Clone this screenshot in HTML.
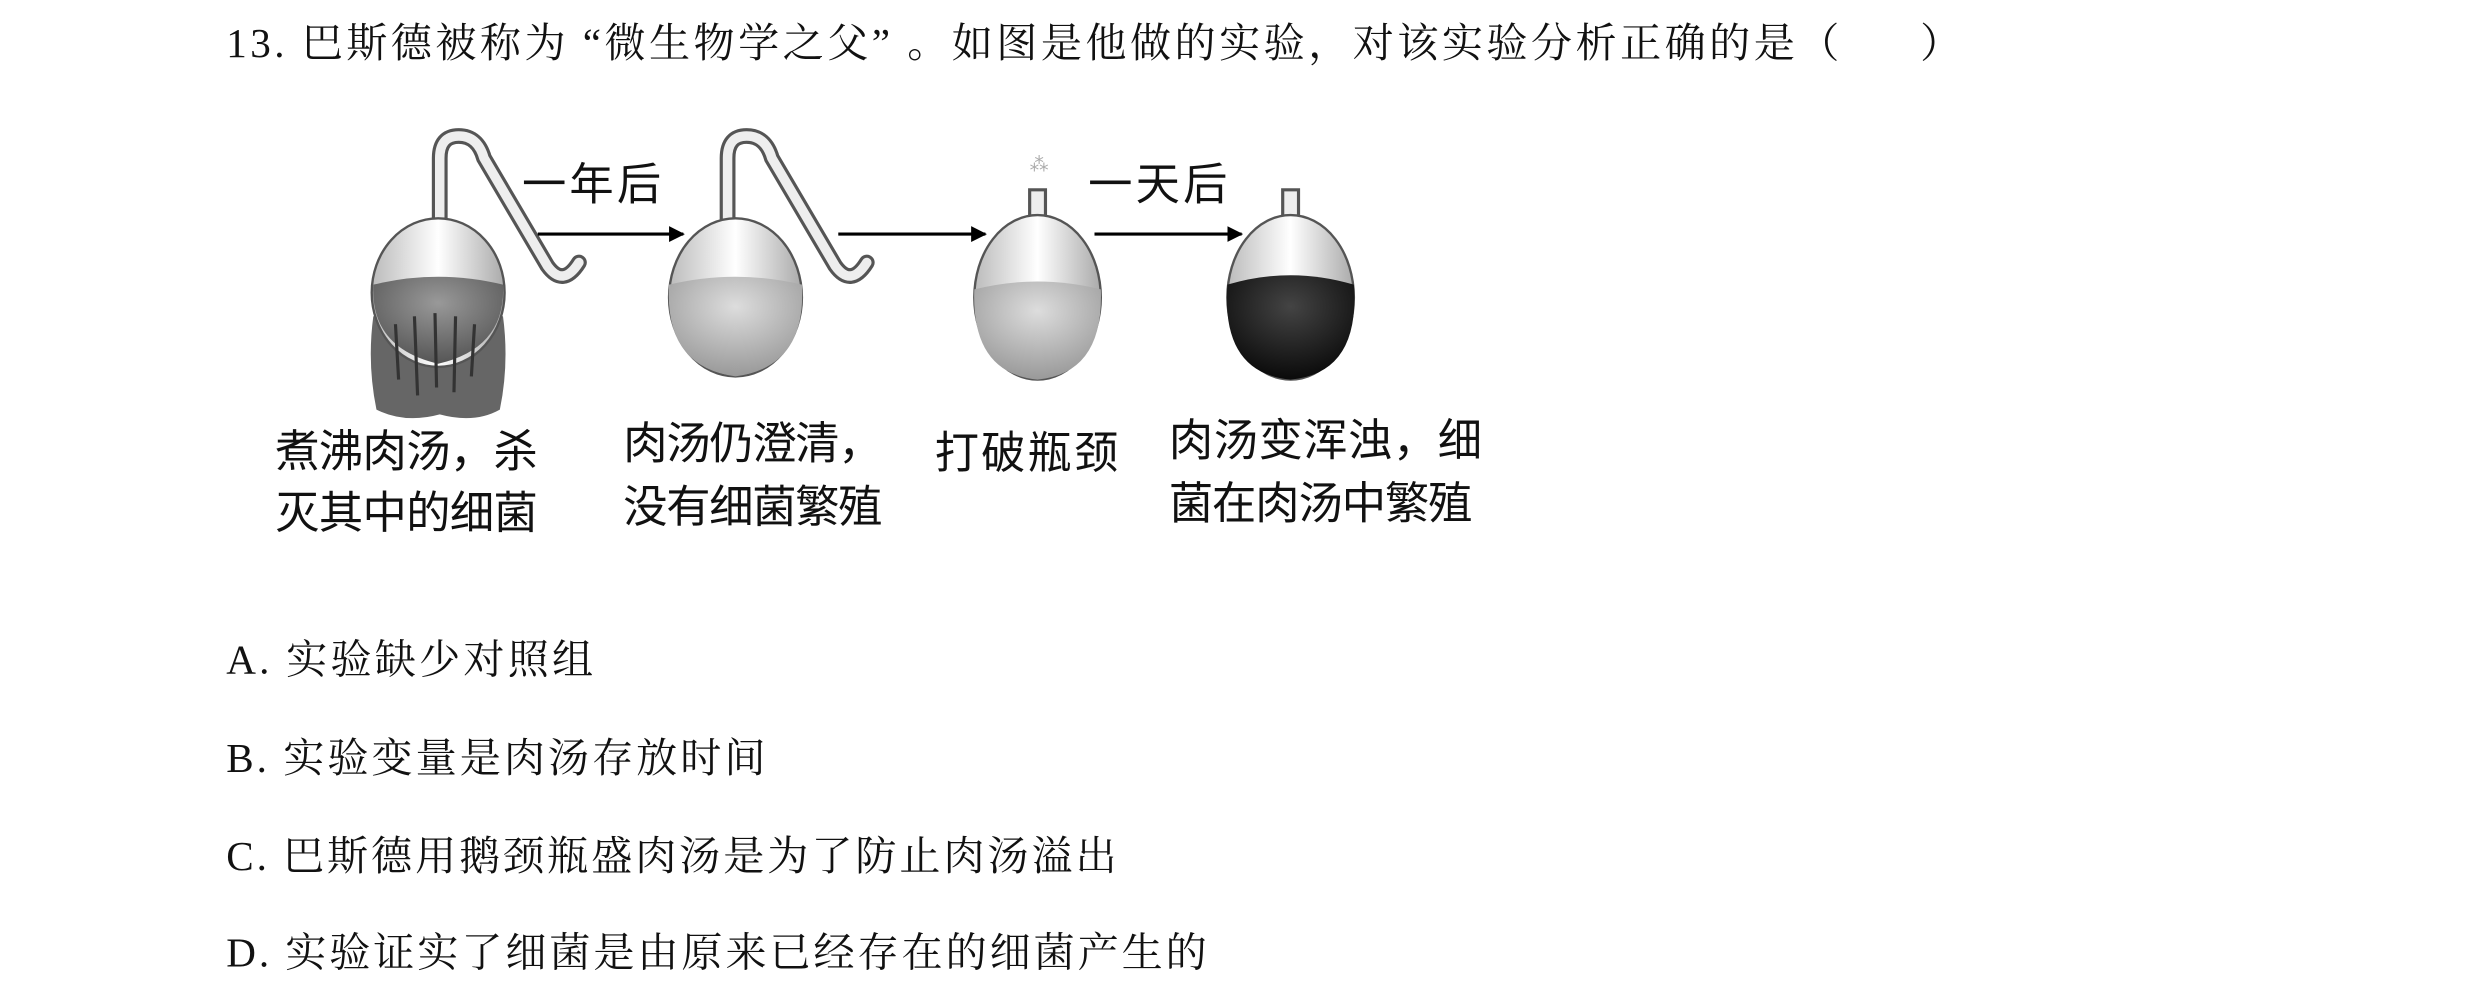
<!DOCTYPE html>
<html><head><meta charset="utf-8"><style>
html,body{margin:0;padding:0;background:#fff;width:2480px;height:991px;overflow:hidden}
svg{display:block}
.q{font-family:"Liberation Serif","Noto Serif CJK SC",serif;font-size:26px;fill:#111}
.l{font-family:"Liberation Sans","Noto Sans CJK SC",sans-serif;font-size:28px;fill:#111}
</style></head><body>
<svg width="2480" height="991" viewBox="0 0 1568 626.6" xmlns="http://www.w3.org/2000/svg">
<defs>
<linearGradient id="gl" x1="0" x2="1"><stop offset="0" stop-color="#bbb"/><stop offset=".5" stop-color="#fff"/><stop offset="1" stop-color="#aaa"/></linearGradient>
<radialGradient id="light" cx=".5" cy=".3" r=".7"><stop offset="0" stop-color="#ddd"/><stop offset="1" stop-color="#999"/></radialGradient>
<radialGradient id="dark" cx=".5" cy=".3" r=".7"><stop offset="0" stop-color="#444"/><stop offset="1" stop-color="#0a0a0a"/></radialGradient>
<radialGradient id="boil" cx=".5" cy=".3" r=".7"><stop offset="0" stop-color="#999"/><stop offset="1" stop-color="#555"/></radialGradient>
<marker id="ar" markerWidth="10" markerHeight="10" refX="9" refY="5" orient="auto" markerUnits="userSpaceOnUse"><path d="M0,0 L10,5 L0,10 Z" fill="#000"/></marker>
</defs>
<text class="q" x="143" y="36" textLength="1020" lengthAdjust="spacing">13. 巴斯德被称为 “微生物学之父” 。如图是他做的实验，对该实验分析正确的是（</text>
<text class="q" x="1214" y="36">）</text>

<!-- flask 1 -->
<path d="M278,140 L278,100 Q278,86 290,86 Q302,86 306,100 L346,168 Q356,182 366,166" fill="none" stroke="#555" stroke-width="10" stroke-linecap="round"/>
<path d="M278,140 L278,100 Q278,86 290,86 Q302,86 306,100 L346,168 Q356,182 366,166" fill="none" stroke="#eee" stroke-width="6" stroke-linecap="round"/>
<path d="M238,259 Q232,230 236,200 L318,200 Q322,230 316,259 Q300,268 278,262 Q256,268 238,259Z" fill="#666"/>
<ellipse cx="277" cy="185" rx="42" ry="47" fill="url(#gl)" stroke="#555" stroke-width="1.5"/>
<path d="M236,180 Q277,170 318,180 Q320,220 277,230 Q234,220 236,180Z" fill="url(#boil)"/>
<path d="M250,205 L252,240 M262,200 L264,250 M275,198 L276,245 M288,200 L287,248 M300,205 L298,238" stroke="#333" stroke-width="2"/>
<!-- flask 2 -->
<path d="M460,140 L460,100 Q460,86 472,86 Q484,86 488,100 L528,168 Q538,182 548,166" fill="none" stroke="#555" stroke-width="10" stroke-linecap="round"/>
<path d="M460,140 L460,100 Q460,86 472,86 Q484,86 488,100 L528,168 Q538,182 548,166" fill="none" stroke="#eee" stroke-width="6" stroke-linecap="round"/>
<ellipse cx="465" cy="188" rx="42" ry="50" fill="url(#gl)" stroke="#555" stroke-width="1.5"/>
<path d="M423,180 Q465,170 507,180 Q510,232 465,238 Q420,232 423,180Z" fill="url(#light)"/>
<!-- flask 3 -->
<path d="M651,140 L651,120 L661,120 L661,140" fill="#eee" stroke="#555" stroke-width="2"/>
<text x="651" y="108" font-size="12" fill="#aaa">⁂</text>
<ellipse cx="656" cy="188" rx="40" ry="52" fill="url(#gl)" stroke="#555" stroke-width="1.5"/>
<path d="M616,183 Q656,173 696,183 Q698,236 656,240 Q614,236 616,183Z" fill="url(#light)"/>
<!-- flask 4 -->
<path d="M811,140 L811,120 L821,120 L821,140" fill="#eee" stroke="#555" stroke-width="2"/>
<ellipse cx="816" cy="188" rx="40" ry="52" fill="url(#gl)" stroke="#555" stroke-width="1.5"/>
<path d="M776,180 Q816,168 856,180 Q860,236 816,240 Q772,236 776,180Z" fill="url(#dark)"/>

<!-- arrows -->
<line x1="340" y1="148" x2="432" y2="148" stroke="#000" stroke-width="2" marker-end="url(#ar)"/>
<line x1="530" y1="148" x2="623" y2="148" stroke="#000" stroke-width="2" marker-end="url(#ar)"/>
<line x1="692" y1="148" x2="785" y2="148" stroke="#000" stroke-width="2" marker-end="url(#ar)"/>
<text class="l" x="330" y="126" textLength="88">一年后</text>
<text class="l" x="688" y="126" textLength="88">一天后</text>

<text class="l" x="174" y="295" textLength="166">煮沸肉汤，杀</text>
<text class="l" x="174" y="334" textLength="166">灭其中的细菌</text>
<text class="l" x="394" y="290" textLength="164">肉汤仍澄清，</text>
<text class="l" x="394" y="330" textLength="164">没有细菌繁殖</text>
<text class="l" x="591" y="296" textLength="116">打破瓶颈</text>
<text class="l" x="739" y="288" textLength="198">肉汤变浑浊，细</text>
<text class="l" x="739" y="328" textLength="192">菌在肉汤中繁殖</text>

<text class="q" x="143" y="426" textLength="232" lengthAdjust="spacing">A.  实验缺少对照组</text>
<text class="q" x="143" y="488" textLength="341" lengthAdjust="spacing">B.  实验变量是肉汤存放时间</text>
<text class="q" x="143" y="550" textLength="563" lengthAdjust="spacing">C.  巴斯德用鹅颈瓶盛肉汤是为了防止肉汤溢出</text>
<text class="q" x="143" y="611" textLength="620" lengthAdjust="spacing">D.  实验证实了细菌是由原来已经存在的细菌产生的</text>
</svg>
</body></html>
